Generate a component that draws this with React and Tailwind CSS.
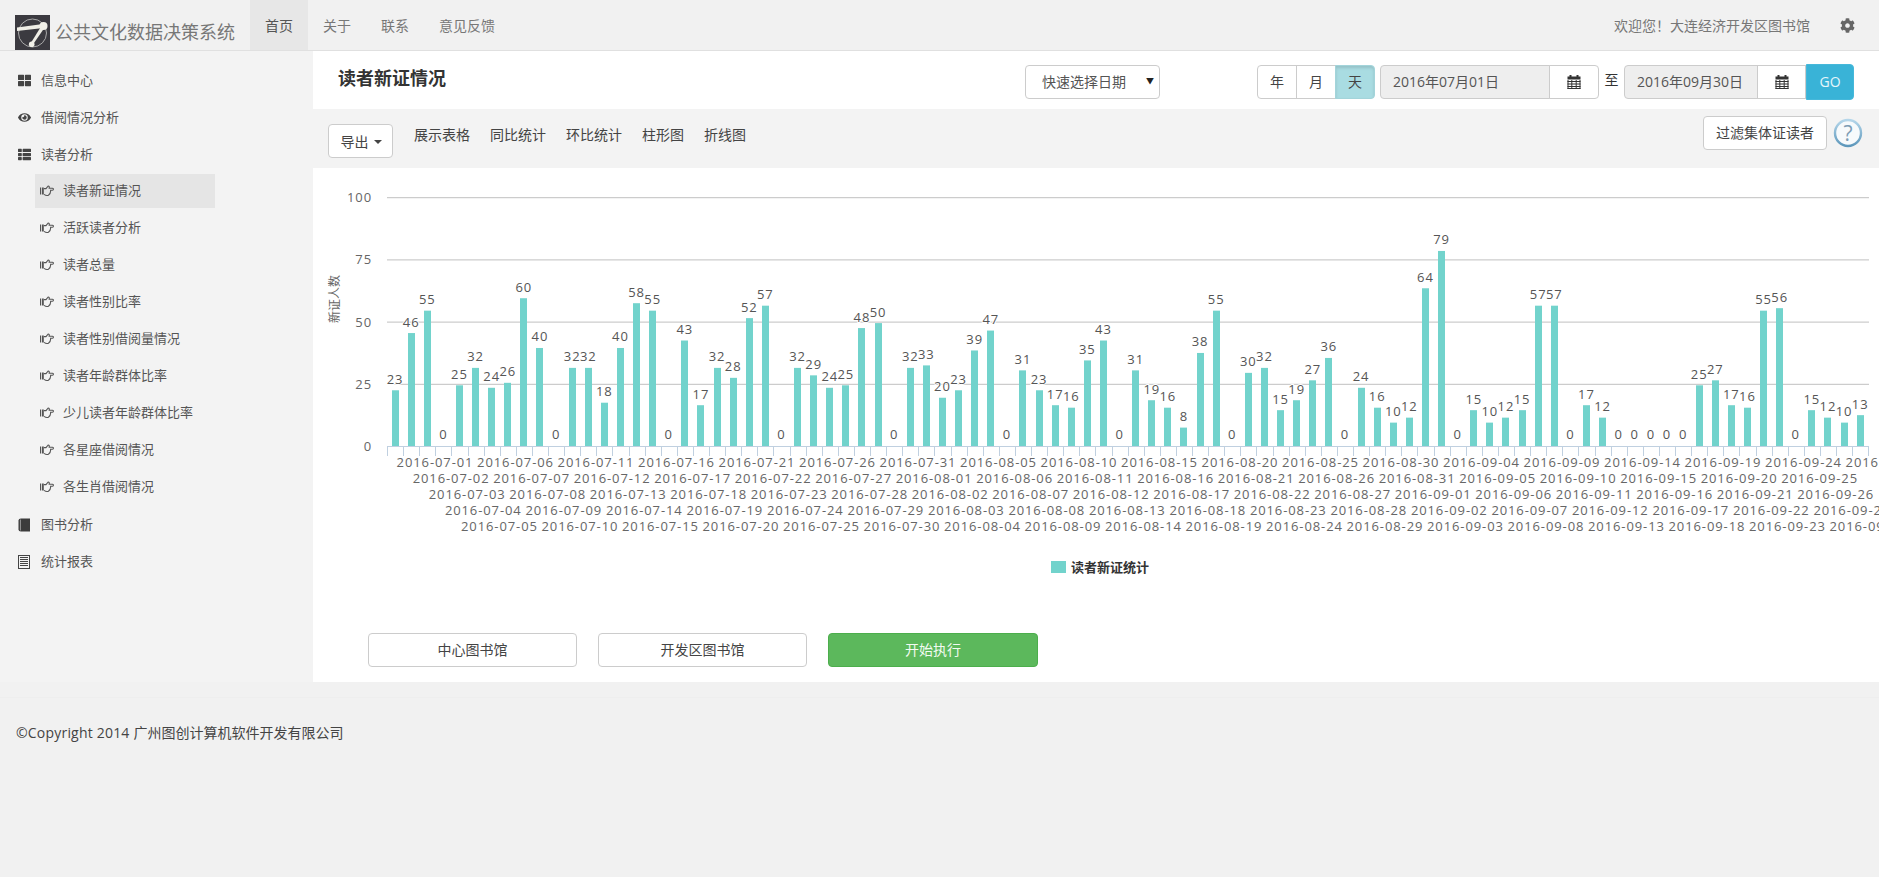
import React from 'react';
import { FaThLarge, FaEye, FaThList, FaCog } from 'react-icons/fa';

const font = { fontFamily: '"Open Sans", "Noto Sans CJK SC", sans-serif' };

const values = [
    23, 46, 55, 0, 25, 32, 24, 26, 60, 40, 0, 32, 32, 18, 40, 58, 55, 0, 43, 17, 32, 28, 52, 57, 0,
    32, 29, 24, 25, 48, 50, 0, 32, 33, 20, 23, 39, 47, 0, 31, 23, 17, 16, 35, 43, 0, 31, 19, 16, 8, 38, 55, 0,
    30, 32, 15, 19, 27, 36, 0, 24, 16, 10, 12, 64, 79, 0, 15, 10, 12, 15, 57, 57, 0, 17, 12, 0, 0, 0, 0, 0,
    25, 27, 17, 16, 55, 56, 0, 15, 12, 10, 13,
];

const subItems = ['读者新证情况', '活跃读者分析', '读者总量', '读者性别比率', '读者性别借阅量情况', '读者年龄群体比率', '少儿读者年龄群体比率', '各星座借阅情况', '各生肖借阅情况'];

function dateLabel(k) {
    const d = new Date(Date.UTC(2016, 6, 1 + k));
    const mm = String(d.getUTCMonth() + 1).padStart(2, '0');
    const dd = String(d.getUTCDate()).padStart(2, '0');
    return `2016-${mm}-${dd}`;
}

function Logo() {
    return (
        <svg width="35" height="35" viewBox="0 0 35 35" className="shrink-0">
            <rect width="35" height="35" fill="#3b3a40" />
            <circle cx="17.5" cy="18" r="14" fill="none" stroke="#a9a9a9" strokeWidth="1" />
            <path d="M2 12.5 L28 9 L28.5 13 L2 16 Z" fill="#efeee6" />
            <path d="M27 10 L15.5 28.5 L18 29.5 L30 12 Z" fill="#efeee6" />
            <circle cx="28.5" cy="11" r="4" fill="#f1f0e8" />
            <circle cx="16.7" cy="29.3" r="2.8" fill="#f1f0e8" />
        </svg>
    );
}

// fa-hand-o-right: cuff bar on the left, open palm, finger pointing right
function HandIcon() {
    return (
        <svg width="14" height="12" viewBox="0 0 14 12" className="mr-[9px] shrink-0">
            <rect x="0" y="2.5" width="1.2" height="7" fill="#555555" />
            <rect x="2" y="2.5" width="1.8" height="7" fill="#555555" />
            <path d="M4 3.6 H6 L8.2 1 Q9.6 1 9.2 3.2 H12.4 Q13.6 3.4 13.4 4.4 Q13.2 5.2 12.2 5.2 H10.6 Q11 8.4 8.4 10.2 Q6.6 11.2 4 9.4" fill="none" stroke="#555555" strokeWidth="1.1" />
        </svg>
    );
}

function BookIcon() {
    return (
        <svg width="13" height="14" viewBox="0 0 13 14" className="mr-[10px] shrink-0">
            <path d="M3 0.5 H12 V13.5 H3 Q0.5 13.5 0.5 11.5 V2.5 Q0.5 0.5 3 0.5 Z" fill="#3c3c3c" />
            <path d="M2.4 1.5 V12.5" stroke="#9a9a9a" strokeWidth="1" />
        </svg>
    );
}

function ReportIcon() {
    return (
        <svg width="13" height="14" viewBox="0 0 13 14" className="mr-[10px] shrink-0">
            <rect x="0.5" y="0.5" width="11" height="13" fill="none" stroke="#444444" />
            <path d="M2 2.5 H10 M2 4.5 H10 M2 6.5 H10 M2 8.5 H10 M2 10.5 H10" stroke="#444444" strokeWidth="1" />
        </svg>
    );
}

// glyphicon-calendar: solid top band with tabs and a ruled body
function CalendarIcon() {
    return (
        <svg width="14" height="14" viewBox="0 0 14 14">
            <rect x="2.5" y="0" width="2" height="2" fill="#333333" />
            <rect x="9.5" y="0" width="2" height="2" fill="#333333" />
            <rect x="0.5" y="1.5" width="13" height="3" fill="#333333" />
            <path d="M0.5 6.5 H13.5 M0.5 9 H13.5 M0.5 11.5 H13.5 M0.5 13.5 H13.5" stroke="#333333" strokeWidth="1.2" />
            <path d="M1 5 V14 M13 5 V14 M4.8 5 V14 M9.2 5 V14" stroke="#333333" strokeWidth="1" />
        </svg>
    );
}

function Chart() {
    const left = 387;
    const step = 16.1;
    const y0 = 446;
    const scale = 62.2 / 25;
    return (
        <svg width="1566" height="450" viewBox="313 168 1566 450" className="block" style={font}>
            {[100, 75, 50, 25].map((v) => (
                <line key={v} x1={left} x2="1869" y1={y0 - v * scale + 0.5} y2={y0 - v * scale + 0.5} stroke="#c0c0c0" />
            ))}
            <line x1={left} x2="1869" y1={y0 + 0.5} y2={y0 + 0.5} stroke="#c0d0e0" />
            {Array.from({ length: 93 }, (_, i) => (
                <line key={i} x1={Math.round(left + i * step) + 0.5} x2={Math.round(left + i * step) + 0.5} y1={y0} y2={y0 + 10} stroke="#c0d0e0" />
            ))}
            {[100, 75, 50, 25, 0].map((v) => (
                <text key={v} x="372" y={y0 - v * scale + 5} textAnchor="end" fontSize="13" fill="#666" letterSpacing="0.9">{v}</text>
            ))}
            <text transform="translate(339 299) rotate(-90)" textAnchor="middle" fontSize="12" fill="#666">新证人数</text>
            {values.map((v, i) => {
                const cx = left + step * (i + 0.5);
                const h = v * scale;
                if (v === 0) return null;
                return <rect key={i} x={Math.round(cx - 3.5)} y={y0 - h + 1.5} width="7" height={h - 1.5} fill="#72d3cc" />;
            })}
            {values.map((v, i) => {
                const cx = left + step * (i + 0.5);
                return (
                    <text
                        key={i}
                        x={cx}
                        y={v === 0 ? y0 - 7 : y0 - v * scale - 5}
                        textAnchor="middle"
                        fontSize="13"
                        fill="#555"
                        letterSpacing="0.9"
                        stroke="#fff"
                        strokeWidth="2"
                        paintOrder="stroke"
                    >
                        {v}
                    </text>
                );
            })}
            {values.slice(0, 91).map((_, k) => (
                <text key={k} x={435 + step * k} y={467 + (k % 5) * 16} textAnchor="middle" fontSize="13" fill="#666" letterSpacing="0.9">
                    {dateLabel(k)}
                </text>
            ))}
            <rect x="1051" y="561" width="15" height="12" fill="#72d3cc" />
            <text x="1071" y="572" fontSize="13" fontWeight="700" fill="#333">读者新证统计</text>
        </svg>
    );
}

function DateField({ value, inputWidth }) {
    return (
        <div className="flex h-[34px]">
            <div className={`${inputWidth} flex items-center pl-3 bg-[#eeeeee] border border-[#cccccc] rounded-l-[4px] text-sm text-[#555555]`}>{value}</div>
        </div>
    );
}

export default function App() {
    return (
        <div className="min-h-screen w-full overflow-hidden bg-[#f1f1f1] text-[#555555]" style={font}>
            <header className="h-[51px] flex bg-[#f1f1f1] border-b border-[#e0e0e0]">
                <div className="w-[250px] flex items-start pt-[15px] pl-[15px]">
                    <Logo />
                    <span className="ml-[5px] text-[18px] leading-[35px] text-[#777777] whitespace-nowrap">公共文化数据决策系统</span>
                </div>
                <nav className="flex text-sm text-[#777777]">
                    <a className="h-[50px] px-[15px] leading-[52px] bg-[#e7e7e7] text-[#555555]">首页</a>
                    <a className="h-[50px] px-[15px] leading-[52px]">关于</a>
                    <a className="h-[50px] px-[15px] leading-[52px]">联系</a>
                    <a className="h-[50px] px-[15px] leading-[52px]">意见反馈</a>
                </nav>
                <div className="ml-auto flex items-start h-[50px] leading-[52px] text-sm text-[#777777]">
                    <span>欢迎您！大连经济开发区图书馆</span>
                    <FaCog className="w-[15px] h-[15px] ml-[30px] mr-[24px] mt-[18px] text-[#666666]" />
                </div>
            </header>

            <div className="flex">
                <aside className="w-[313px] shrink-0 pt-[11px] text-[13px] bg-[#f3f3f3]">
                    {[[FaThLarge, '信息中心'], [FaEye, '借阅情况分析'], [FaThList, '读者分析']].map(([Icon, label]) => (
                        <div key={label} className="h-[37px] pl-[18px] flex items-center">
                            <Icon className="w-[13px] h-[13px] text-[#444444] mr-[10px]" />
                            <span>{label}</span>
                        </div>
                    ))}
                    <div className="pt-px -mb-px">
                        {subItems.map((label, i) => (
                            <div key={label} className={`ml-[35px] w-[180px] h-[34px] mb-[3px] pl-[5px] flex items-center ${i === 0 ? 'bg-[#e5e5e5]' : ''}`}>
                                <HandIcon />
                                <span>{label}</span>
                            </div>
                        ))}
                    </div>
                    <div className="h-[37px] pl-[18px] flex items-center">
                        <BookIcon />
                        <span>图书分析</span>
                    </div>
                    <div className="h-[37px] pl-[18px] flex items-center">
                        <ReportIcon />
                        <span>统计报表</span>
                    </div>
                </aside>

                <main className="w-[1566px] shrink-0 h-[631px] bg-white">
                    <div className="h-[58px] flex items-start pt-[14px]">
                        <h1 className="ml-[25px] w-[108px] text-[18px] leading-[26px] font-bold text-[#333333] whitespace-nowrap">读者新证情况</h1>
                        <div className="ml-[579px] w-[135px] h-[34px] flex items-center pl-[16px] bg-white border border-[#cccccc] rounded-[4px] text-sm relative">
                            快速选择日期
                            <span className="absolute right-[5px] top-[10px] text-[8px] leading-[10px] text-[#222222]">▼</span>
                        </div>
                        <div className="ml-[97px] flex h-[34px] text-sm text-[#444444]">
                            <span className="w-[40px] flex items-center justify-center border border-[#cccccc] rounded-l-[4px]">年</span>
                            <span className="w-[40px] -ml-px flex items-center justify-center border border-[#cccccc]">月</span>
                            <span className="w-[40px] -ml-px flex items-center justify-center border border-[#a3d4da] bg-[#a9dce2] rounded-r-[4px] shadow-[inset_0_2px_3px_rgba(0,0,0,0.12)]">天</span>
                        </div>
                        <div className="ml-[5px] flex">
                            <DateField value="2016年07月01日" inputWidth="w-[170px]" />
                            <span className="w-[50px] h-[34px] -ml-px flex items-center justify-center border border-[#cccccc] rounded-r-[4px]">
                                <CalendarIcon />
                            </span>
                        </div>
                        <span className="w-[25px] h-[30px] flex items-center justify-center text-sm text-[#333333]">至</span>
                        <div className="flex">
                            <DateField value="2016年09月30日" inputWidth="w-[134px]" />
                            <span className="w-[49px] h-[34px] -ml-px flex items-center justify-center border border-[#cccccc]">
                                <CalendarIcon />
                            </span>
                            <span className="w-[48px] h-[36px] -mt-px flex items-center justify-center bg-[#39b3d7] border border-[#46b8da] rounded-r-[4px] text-sm text-[#e6f6fb]">GO</span>
                        </div>
                    </div>

                    <div className="h-[59px] flex items-start bg-[#f3f3f3]">
                        <button className="ml-[15px] mt-[15px] w-[65px] h-[34px] flex items-center justify-center gap-[5px] pl-px pt-px bg-white border border-[#cccccc] rounded-[4px] text-sm text-[#444444]">
                            导出
                            <span className="w-0 h-0 border-x-[4px] border-x-transparent border-t-[4px] border-t-[#444444]" />
                        </button>
                        <div className="ml-[21px] flex gap-5 text-sm leading-[52px] text-[#444444]">
                            <a>展示表格</a>
                            <a>同比统计</a>
                            <a>环比统计</a>
                            <a>柱形图</a>
                            <a>折线图</a>
                        </div>
                        <button className="ml-auto mt-[7px] w-[124px] h-[34px] bg-white border border-[#cccccc] rounded-[4px] text-sm text-[#444444]">过滤集体证读者</button>
                        <svg width="30" height="30" viewBox="0 0 30 30" className="ml-[6px] mr-[16px] mt-[9px]">
                            <defs>
                                <linearGradient id="helpRing" x1="0" y1="0" x2="0" y2="1">
                                    <stop offset="0" stopColor="#b4d6ea" />
                                    <stop offset="1" stopColor="#5d97bb" />
                                </linearGradient>
                            </defs>
                            <circle cx="15" cy="15" r="13" fill="#f7fafc" stroke="url(#helpRing)" strokeWidth="2.4" />
                            <text x="15" y="22.5" textAnchor="middle" fontSize="21" fill="#7d9db5">?</text>
                        </svg>
                    </div>

                    <Chart />

                    <div className="mt-[15px] ml-[55px] flex gap-[21px] text-sm">
                        <button className="w-[209px] h-[34px] bg-white border border-[#cccccc] rounded-[4px] text-[#444444]">中心图书馆</button>
                        <button className="w-[209px] h-[34px] bg-white border border-[#cccccc] rounded-[4px] text-[#444444]">开发区图书馆</button>
                        <button className="w-[210px] h-[34px] bg-[#5cb85c] border border-[#4cae4c] rounded-[4px] text-[#f2fbf2]">开始执行</button>
                    </div>
                </main>
            </div>

            <footer className="pt-[15px]">
                <div className="border-t border-[#eeeeee]" />
                <p className="pl-[16px] pt-[25px] text-sm leading-[20px] text-[#444444]">
                    <span className="tracking-[0.2px]">©Copyright 2014 </span>广州图创计算机软件开发有限公司
                </p>
            </footer>
        </div>
    );
}
